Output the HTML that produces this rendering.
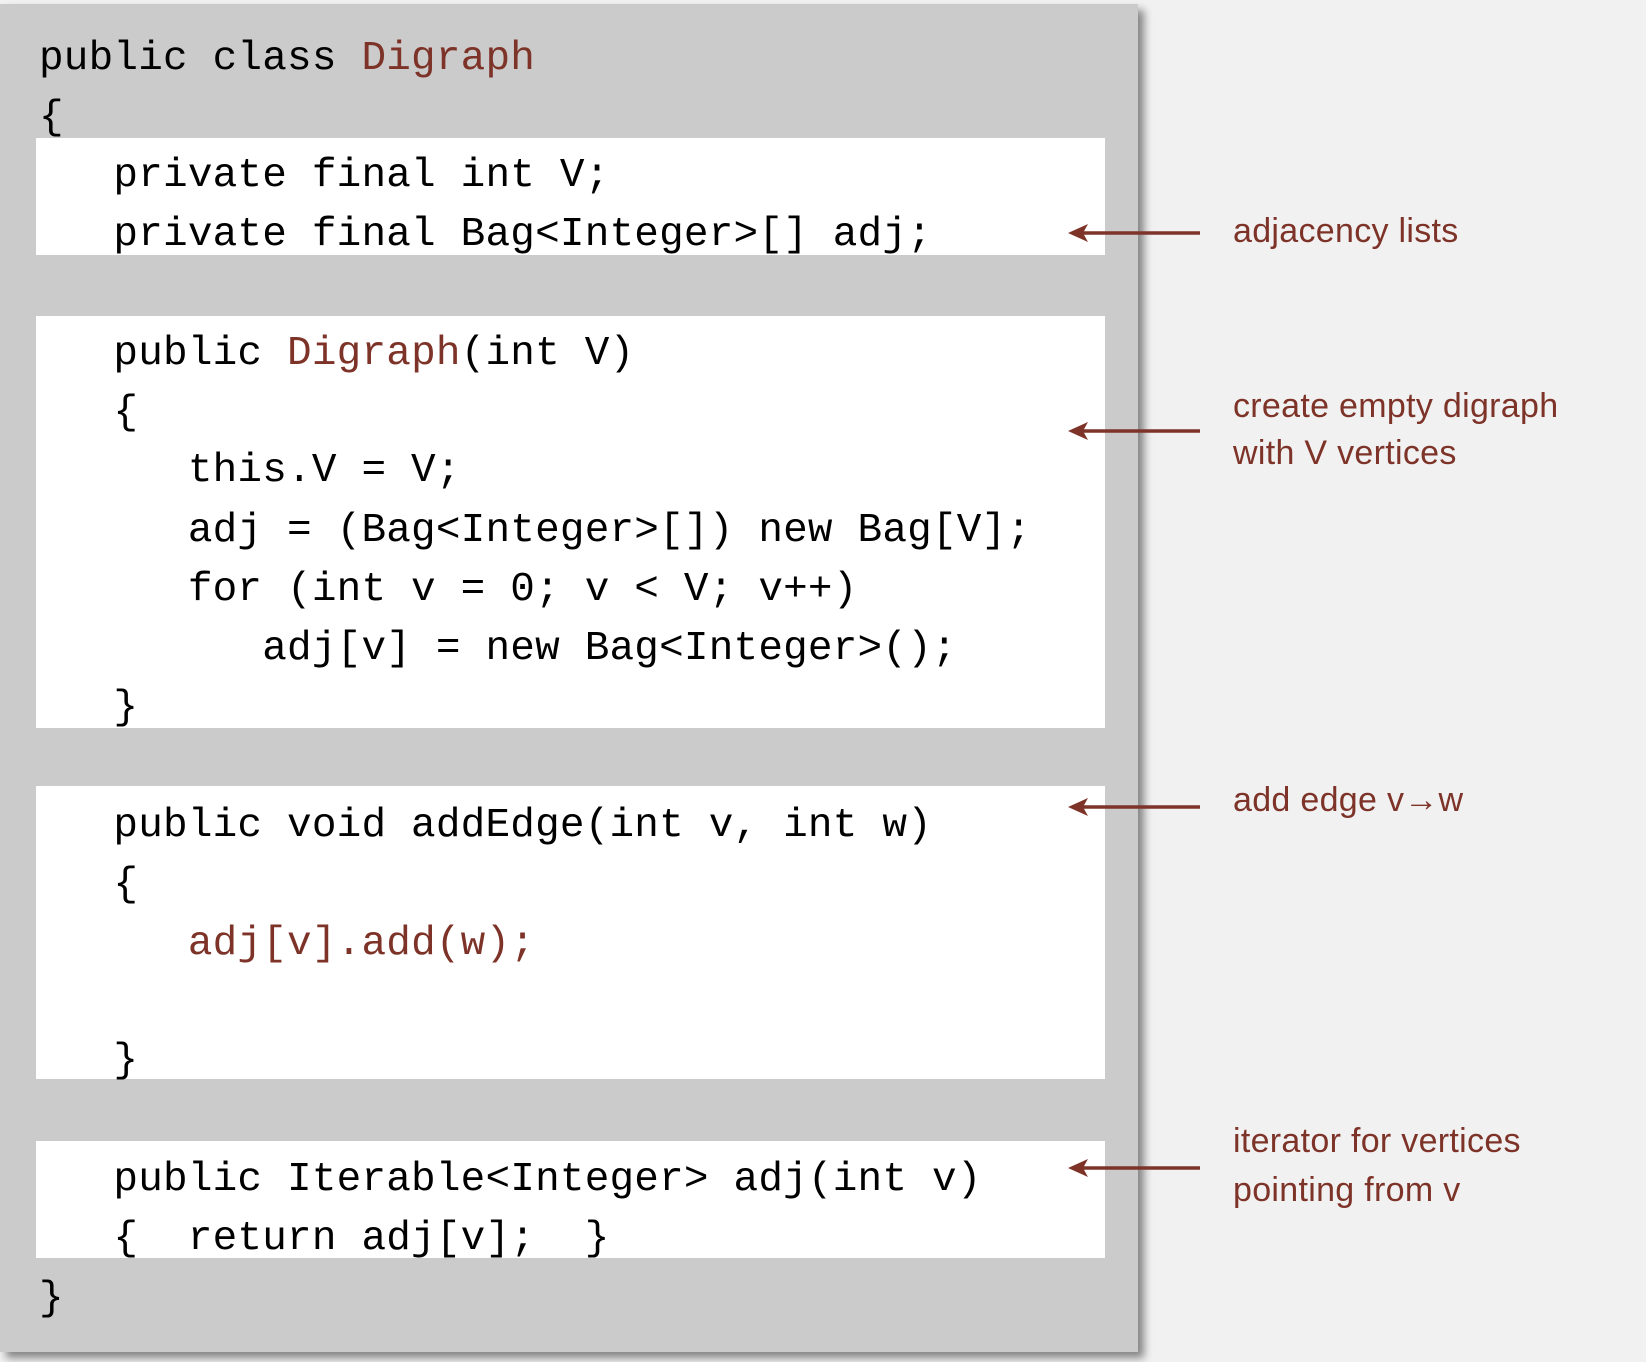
<!DOCTYPE html>
<html><head><meta charset="utf-8"><style>
body{margin:0;width:1646px;height:1362px;background:#f1f1f1;position:relative;overflow:hidden}
.panel{position:absolute;left:0;top:4px;width:1138px;height:1348px;background:#cbcbcb;box-shadow:6px 6px 8px rgba(0,0,0,0.45)}
.box{position:absolute;left:36px;width:1069px;background:#fff}
.l{position:absolute;height:60px;line-height:60px;font-family:"Liberation Mono",monospace;font-size:41px;color:#000;white-space:pre;letter-spacing:0.2px}
.r{color:#7d3328}
.a{position:absolute;font-family:"Liberation Sans",sans-serif;font-size:34px;color:#7d3328;white-space:pre;line-height:48px;letter-spacing:0.3px}
svg{position:absolute;left:0;top:0}
</style></head><body>
<div class="panel"></div>
<div class="box" style="top:138px;height:117px"></div>
<div class="box" style="top:316px;height:412px"></div>
<div class="box" style="top:786px;height:293px"></div>
<div class="box" style="top:1141px;height:117px"></div>

<div class="l" style="left:39px;top:29px">public class <span class="r">Digraph</span></div>
<div class="l" style="left:39px;top:88px">{</div>
<div class="l" style="left:39px;top:146px">   private final int V;</div>
<div class="l" style="left:39px;top:205px">   private final Bag&lt;Integer&gt;[] adj;</div>
<div class="l" style="left:39px;top:324px">   public <span class="r">Digraph</span>(int V)</div>
<div class="l" style="left:39px;top:383px">   {</div>
<div class="l" style="left:39px;top:441px">      this.V = V;</div>
<div class="l" style="left:39px;top:501px">      adj = (Bag&lt;Integer&gt;[]) new Bag[V];</div>
<div class="l" style="left:39px;top:560px">      for (int v = 0; v &lt; V; v++)</div>
<div class="l" style="left:39px;top:619px">         adj[v] = new Bag&lt;Integer&gt;();</div>
<div class="l" style="left:39px;top:678px">   }</div>
<div class="l" style="left:39px;top:796px">   public void addEdge(int v, int w)</div>
<div class="l" style="left:39px;top:855px">   {</div>
<div class="l" style="left:39px;top:914px">      <span class="r">adj[v].add(w);</span></div>
<div class="l" style="left:39px;top:1031px">   }</div>
<div class="l" style="left:39px;top:1150px">   public Iterable&lt;Integer&gt; adj(int v)</div>
<div class="l" style="left:39px;top:1209px">   {  return adj[v];  }</div>
<div class="l" style="left:39px;top:1269px">}</div>

<svg width="1646" height="1362">
<g stroke="#7d3328" stroke-width="3.5" fill="#7d3328">
<line x1="1078" y1="233" x2="1200" y2="233"/><path d="M1068 233 L1088 224 L1083 233 L1088 242Z" stroke="none"/>
<line x1="1078" y1="431" x2="1200" y2="431"/><path d="M1068 431 L1088 422 L1083 431 L1088 440Z" stroke="none"/>
<line x1="1078" y1="807" x2="1200" y2="807"/><path d="M1068 807 L1088 798 L1083 807 L1088 816Z" stroke="none"/>
<line x1="1078" y1="1168" x2="1200" y2="1168"/><path d="M1068 1168 L1088 1159 L1083 1168 L1088 1177Z" stroke="none"/>
</g></svg>

<div class="a" style="left:1233px;top:207px">adjacency lists</div>
<div class="a" style="left:1233px;top:382px">create empty digraph</div>
<div class="a" style="left:1233px;top:429px">with V vertices</div>
<div class="a" style="left:1233px;top:776px">add edge v→w</div>
<div class="a" style="left:1233px;top:1117px">iterator for vertices</div>
<div class="a" style="left:1233px;top:1166px">pointing from v</div>
</body></html>
